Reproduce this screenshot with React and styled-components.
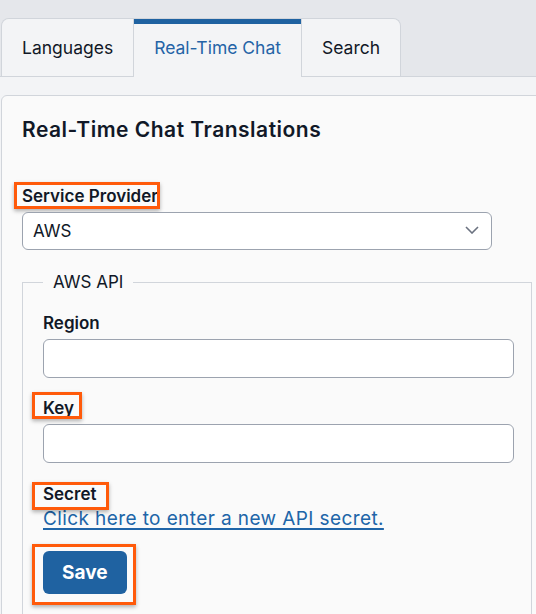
import styled, { createGlobalStyle } from "styled-components";

const GlobalStyle = createGlobalStyle`
  body {
    margin: 0;
    background: #e5e7eb;
    font-family: Inter, "Noto Sans", sans-serif;
    color: #111827;
    overflow: hidden;
  }
  * { box-sizing: border-box; }
`;

const tabs = ["Languages", "Real-Time Chat", "Search"];

const App = () => {
  return (
    <Page>
      <GlobalStyle />
      <TabStrip>
        <TabGroup>
          {tabs.map((t) => (
            <Tab key={t} $active={t === "Real-Time Chat"}>
              {t}
            </Tab>
          ))}
        </TabGroup>
      </TabStrip>
      <ContentArea>
        <Panel>
          <Heading>Real-Time Chat Translations</Heading>
          <Field>
            <Annotated $t={4} $r={2} $b={2} $l={8}>
              <Label>Service Provider</Label>
            </Annotated>
            <SelectWrap>
              <Select defaultValue="aws">
                <option value="aws">AWS</option>
              </Select>
              <Chevron viewBox="0 0 14 8" width="14" height="8">
                <path d="M1 1l6 6 6-6" fill="none" stroke="#6b7280" strokeWidth="1.6" />
              </Chevron>
            </SelectWrap>
          </Field>
          <Fieldset>
            <Legend>AWS API</Legend>
            <Field>
              <Label>Region</Label>
              <Input />
            </Field>
            <Field $spaced>
              <Annotated $t={6} $r={8} $b={0} $l={11}>
                <Label>Key</Label>
              </Annotated>
              <Input />
            </Field>
            <Field $spaced $gap={3}>
              <Annotated $t={2} $r={13} $b={5} $l={11}>
                <Label>Secret</Label>
              </Annotated>
              <Link href="#">Click here to enter a new API secret.</Link>
            </Field>
            <ButtonRow>
              <Annotated $t={7} $r={9} $b={11} $l={11}>
                <SaveButton>Save</SaveButton>
              </Annotated>
            </ButtonRow>
          </Fieldset>
        </Panel>
      </ContentArea>
    </Page>
  );
};

const Page = styled.div`
  padding-top: 18px;
  width: 100%;
  overflow: hidden;
`;

const TabStrip = styled.div`
  display: flex;
  align-items: flex-end;
  border-bottom: 1px solid #d1d5db;
`;

const TabGroup = styled.div`
  display: flex;
  margin-left: 1px;
  border: 1px solid #d1d5db;
  border-bottom: none;
  border-radius: 8px 8px 0 0;
`;

const Tab = styled.div`
  height: ${(p) => (p.$active ? "58px" : "57px")};
  margin-bottom: ${(p) => (p.$active ? "-1px" : "0")};
  padding: 0 20px ${(p) => (p.$active ? "1px" : "0")};
  display: flex;
  align-items: center;
  font-size: 17.5px;
  color: ${(p) => (p.$active ? "#2463a6" : "#111827")};
  background: #f3f4f6;
  box-shadow: ${(p) => (p.$active ? "inset 0 5px 0 #1f62a1" : "none")};
  position: relative;
  z-index: 1;

  & + & {
    border-left: 1px solid #d1d5db;
  }
  &:first-child {
    border-top-left-radius: 7px;
  }
  &:last-child {
    border-top-right-radius: 7px;
  }
`;

const ContentArea = styled.div`
  background: #f3f4f6;
  padding-top: 18px;
`;

const Panel = styled.div`
  margin-left: 1px;
  width: 600px;
  background: #fafafa;
  border: 1px solid #d1d5db;
  border-radius: 6px 0 0 0;
  padding: 22px 0 40px 20px;
`;

const Heading = styled.h2`
  margin: 0 0 44px;
  font-size: 21px;
  letter-spacing: 0.5px;
  line-height: 24px;
  font-weight: 600;
`;

const Field = styled.div`
  display: flex;
  flex-direction: column;
  align-items: flex-start;
  gap: ${(p) => p.$gap ?? 5}px;
  margin-top: ${(p) => (p.$spaced ? "20.5px" : "0")};
`;

const Label = styled.label`
  font-size: 17px;
  line-height: 21px;
  font-weight: 600;
`;

const Annotated = styled.span`
  position: relative;
  display: inline-flex;

  &::after {
    content: "";
    position: absolute;
    top: -${(p) => p.$t}px;
    right: -${(p) => p.$r}px;
    bottom: -${(p) => p.$b}px;
    left: -${(p) => p.$l}px;
    border: 3px solid #ff5a0a;
    box-shadow: 0 2px 4px rgba(0, 0, 0, 0.3);
    pointer-events: none;
  }
`;

const SelectWrap = styled.div`
  position: relative;
  width: 470px;
`;

const Select = styled.select`
  appearance: none;
  width: 100%;
  height: 38px;
  padding: 0 36px 0 10px;
  font-family: inherit;
  font-size: 17px;
  color: #111827;
  background: #fff;
  border: 1px solid #9ca3af;
  border-radius: 6px;
`;

const Chevron = styled.svg`
  position: absolute;
  right: 13px;
  top: 14px;
  pointer-events: none;
`;

const Fieldset = styled.fieldset`
  margin: 21.5px 0 0;
  width: 510px;
  min-width: 0;
  border: 1px solid #d1d5db;
  padding: 20px 20px 40px;
`;

const Legend = styled.legend`
  padding: 0 10px;
  font-size: 17px;
  line-height: 21px;
`;

const Input = styled.input`
  width: 471px;
  height: 39px;
  background: #fff;
  border: 1px solid #9ca3af;
  border-radius: 6px;
  font-family: inherit;
  font-size: 17px;
  padding: 0 10px;
`;

const Link = styled.a`
  font-size: 19px;
  letter-spacing: 0.4px;
  line-height: 22px;
  color: #2065a8;
  text-decoration: underline;
  text-decoration-thickness: 2px;
  text-underline-offset: 3px;
`;

const ButtonRow = styled.div`
  margin-top: 21.5px;
  display: flex;
`;

const SaveButton = styled.button`
  height: 43px;
  padding: 0 19px;
  border: none;
  border-radius: 6px;
  background: #1f62a1;
  color: #fff;
  font-family: inherit;
  font-size: 19px;
  font-weight: 700;
`;

export default App;
